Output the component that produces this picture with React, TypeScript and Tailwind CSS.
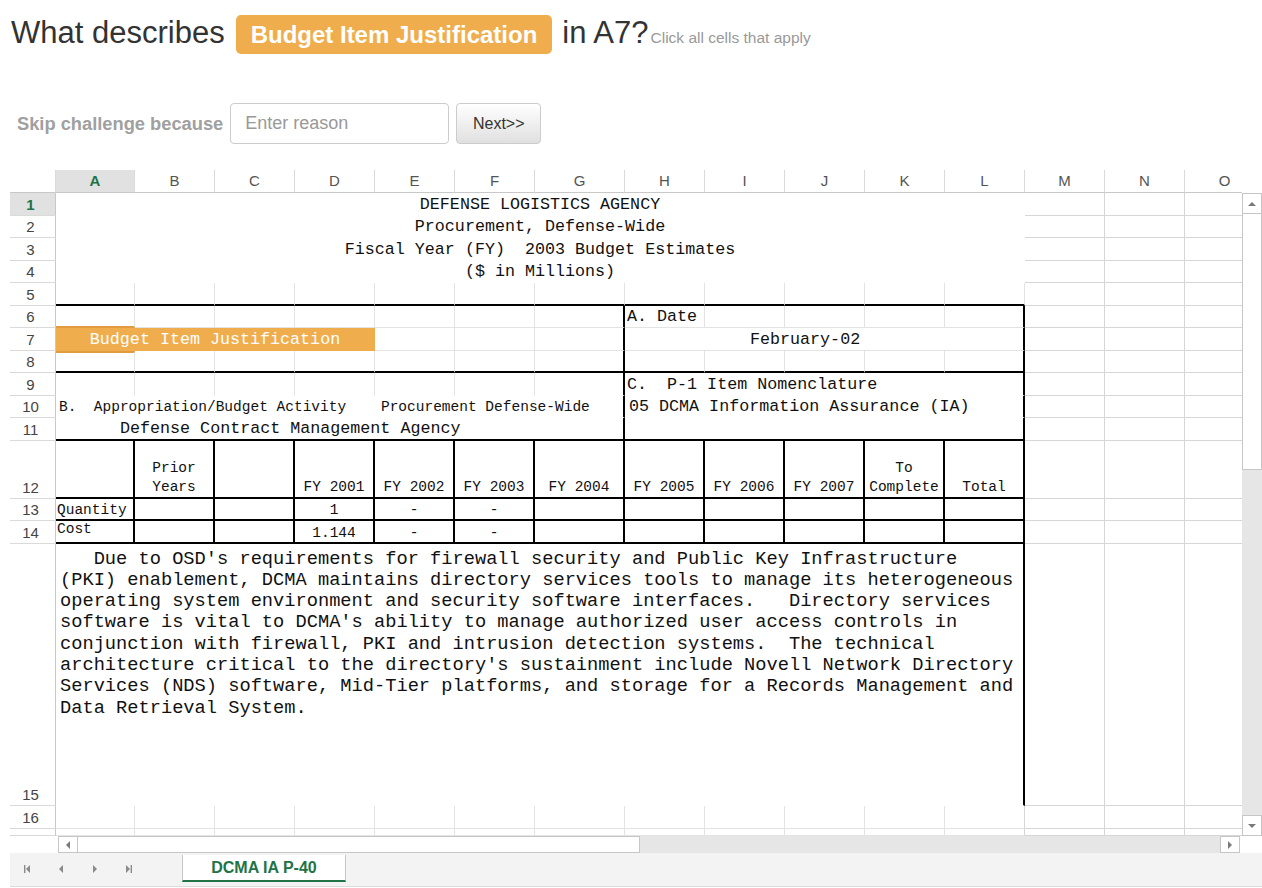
import React from "react";
import clsx from "clsx";

type BK = "w" | "g" | "k" | "o" | "d" | "t";

const BB: Record<BK, string> = {
  w: "border-b border-b-white",
  g: "border-b border-b-[#e3e3e3]",
  k: "border-b-2 border-b-black",
  o: "border-b-2 border-b-[#e39b40]",
  d: "border-b border-b-[#d6d6d6]",
  t: "border-b border-b-transparent",
};

const RR: Record<BK, string> = {
  w: "border-r border-r-white",
  g: "border-r border-r-[#e3e3e3]",
  k: "border-r-2 border-r-black",
  o: "border-r-2 border-r-[#e39b40]",
  d: "border-r border-r-[#d6d6d6]",
  t: "border-r border-r-transparent",
};

function X({
  w,
  b = "w",
  r = "w",
  c,
  children,
}: {
  w: string;
  b?: BK;
  r?: BK;
  c?: string;
  children?: React.ReactNode;
}) {
  return <div className={clsx("box-border h-full shrink-0", w, BB[b], RR[r], c)}>{children}</div>;
}

// columns M, N, O to the right of the form
function Rest() {
  return (
    <>
      <X w="w-[80px]" b="d" r="d" />
      <X w="w-[80px]" b="d" r="d" />
      <X w="w-[80px]" b="d" r="d" />
    </>
  );
}

const big = "text-[16.7px] leading-[18px] flex items-end pb-[1px] whitespace-pre";
const small = "text-[14.5px] leading-[17px] whitespace-pre";
const head = clsx(small, "flex items-end justify-center text-center leading-[19px]");
const num = clsx(small, "flex items-end justify-center");

const colHeads: [string, string][] = [
  ["A", "w-[79px]"],
  ["B", "w-[80px]"],
  ["C", "w-[80px]"],
  ["D", "w-[80px]"],
  ["E", "w-[80px]"],
  ["F", "w-[80px]"],
  ["G", "w-[90px]"],
  ["H", "w-[80px]"],
  ["I", "w-[80px]"],
  ["J", "w-[80px]"],
  ["K", "w-[80px]"],
  ["L", "w-[80px]"],
  ["M", "w-[80px]"],
  ["N", "w-[80px]"],
  ["O", "w-[80px]"],
];

const rowHeads: [string, string][] = [
  ["1", "h-[22.5px]"],
  ["2", "h-[22.5px]"],
  ["3", "h-[22.5px]"],
  ["4", "h-[22.5px]"],
  ["5", "h-[22.5px]"],
  ["6", "h-[22.5px]"],
  ["7", "h-[22.5px]"],
  ["8", "h-[22.5px]"],
  ["9", "h-[22.5px]"],
  ["10", "h-[22.5px]"],
  ["11", "h-[22.5px]"],
  ["12", "h-[58px]"],
  ["13", "h-[22.5px]"],
  ["14", "h-[22.5px]"],
  ["15", "h-[262.5px]"],
  ["16", "h-[22.5px]"],
  ["", "h-[7.5px]"],
];

const paragraph = [
  "   Due to OSD's requirements for firewall security and Public Key Infrastructure",
  "(PKI) enablement, DCMA maintains directory services tools to manage its heterogeneous",
  "operating system environment and security software interfaces.   Directory services",
  "software is vital to DCMA's ability to manage authorized user access controls in",
  "conjunction with firewall, PKI and intrusion detection systems.  The technical",
  "architecture critical to the directory's sustainment include Novell Network Directory",
  "Services (NDS) software, Mid-Tier platforms, and storage for a Records Management and",
  "Data Retrieval System.",
].join("\n");

const fy = ["FY 2001", "FY 2002", "FY 2003", "FY 2004", "FY 2005", "FY 2006", "FY 2007"];

function Row({ h, children }: { h: string; children: React.ReactNode }) {
  return <div className={clsx("flex", h)}>{children}</div>;
}

function Tri({ dir }: { dir: "up" | "down" | "left" | "right" }) {
  const pts = {
    up: "1,7 5,3 9,7",
    down: "1,3 5,7 9,3",
    left: "7,1 3,5 7,9",
    right: "3,1 7,5 3,9",
  }[dir];
  return (
    <svg width="10" height="10" viewBox="0 0 10 10">
      <polygon points={pts} fill="#7a7a7a" />
    </svg>
  );
}

function Sheet() {
  return (
    <div className="mt-[26px] ml-[10px] w-[1252px]">
      {/* column headers */}
      <div className="flex h-[23px]">
        <div className="w-[46px] shrink-0 border-b border-b-[#c8c8c8] border-r border-r-[#dadada]" />
        <div className="flex w-[1186px] overflow-hidden">
          {colHeads.map(([l, w]) => (
            <div
              key={l}
              className={clsx(
                "box-border flex h-full shrink-0 items-center justify-center border-b border-b-[#c8c8c8] border-r border-r-[#dadada] text-[15px]",
                w,
                l === "A" ? "bg-[#e1e1e1] font-bold text-[#217346]" : "text-[#555]"
              )}
            >
              {l}
            </div>
          ))}
        </div>
        <div className="w-[20px] shrink-0" />
      </div>

      <div className="flex h-[643px]">
        {/* row headers */}
        <div className="flex w-[46px] shrink-0 flex-col">
          {rowHeads.map(([n, h], i) => (
            <div
              key={i}
              className={clsx(
                "box-border flex shrink-0 items-end justify-center border-b border-b-[#dadada] border-r border-r-[#c8c8c8] pr-[4px] text-[15px] leading-[21px]",
                h,
                n === "1" ? "bg-[#e1e1e1] font-bold text-[#217346]" : "text-[#444]"
              )}
            >
              {n}
            </div>
          ))}
        </div>

        {/* cells */}
        <div className="w-[1186px] overflow-hidden font-['Liberation_Mono'] text-[#111]">
          {[
            "DEFENSE LOGISTICS AGENCY",
            "Procurement, Defense-Wide",
            "Fiscal Year (FY)  2003 Budget Estimates",
            "($ in Millions)",
          ].map((t) => (
            <Row key={t} h="h-[22.5px]">
              <X w="w-[969px]" c={clsx(big, "justify-center")}>
                {t}
              </X>
              <Rest />
            </Row>
          ))}

          <Row h="h-[22.5px]">
            <X w="w-[79px]" b="k" r="g" />
            <X w="w-[80px]" b="k" r="g" />
            <X w="w-[80px]" b="k" r="g" />
            <X w="w-[80px]" b="k" r="g" />
            <X w="w-[80px]" b="k" r="g" />
            <X w="w-[80px]" b="k" r="g" />
            <X w="w-[90px]" b="k" r="g" />
            <X w="w-[80px]" b="k" r="g" />
            <X w="w-[80px]" b="k" r="g" />
            <X w="w-[80px]" b="k" r="g" />
            <X w="w-[80px]" b="k" r="g" />
            <X w="w-[80px]" b="k" r="g" />
            <Rest />
          </Row>

          <Row h="h-[22.5px]">
            <X w="w-[79px]" b="o" r="g" />
            <X w="w-[80px]" b="g" r="g" />
            <X w="w-[80px]" b="g" r="g" />
            <X w="w-[80px]" b="g" r="g" />
            <X w="w-[80px]" b="g" r="g" />
            <X w="w-[80px]" b="g" r="g" />
            <X w="w-[90px]" b="g" r="k" />
            <X w="w-[80px]" b="g" r="g" c={clsx(big, "pl-[2px]")}>
              A. Date
            </X>
            <X w="w-[80px]" b="g" r="g" />
            <X w="w-[80px]" b="g" r="g" />
            <X w="w-[80px]" b="g" r="g" />
            <X w="w-[80px]" b="g" r="k" />
            <Rest />
          </Row>

          <Row h="h-[22.5px]">
            <X w="w-[319px]" b="t" r="t" c={clsx(big, "justify-center bg-[#f0ad4e] text-white")}>
              Budget Item Justification
            </X>
            <X w="w-[80px]" b="g" r="g" />
            <X w="w-[80px]" b="g" r="g" />
            <X w="w-[90px]" b="g" r="k" />
            <X w="w-[400px]" b="g" r="k" c={clsx(big, "pl-[125px]")}>
              February-02
            </X>
            <Rest />
          </Row>

          <Row h="h-[22.5px]">
            <X w="w-[79px]" b="k" r="g" c="border-t-2 border-t-[#e39b40]" />
            <X w="w-[80px]" b="k" r="g" />
            <X w="w-[80px]" b="k" r="g" />
            <X w="w-[80px]" b="k" r="g" />
            <X w="w-[80px]" b="k" r="g" />
            <X w="w-[80px]" b="k" r="g" />
            <X w="w-[90px]" b="k" r="k" />
            <X w="w-[80px]" b="k" r="g" />
            <X w="w-[80px]" b="k" r="g" />
            <X w="w-[80px]" b="k" r="g" />
            <X w="w-[80px]" b="k" r="g" />
            <X w="w-[80px]" b="k" r="k" />
            <Rest />
          </Row>

          <Row h="h-[22.5px]">
            <X w="w-[79px]" r="g" />
            <X w="w-[80px]" r="g" />
            <X w="w-[80px]" r="g" />
            <X w="w-[80px]" r="g" />
            <X w="w-[80px]" r="g" />
            <X w="w-[80px]" r="g" />
            <X w="w-[90px]" r="k" />
            <X w="w-[400px]" r="k" c={clsx(big, "pl-[2px]")}>
              {"C.  P-1 Item Nomenclature"}
            </X>
            <Rest />
          </Row>

          <Row h="h-[22.5px]">
            <X w="w-[569px]" r="k" c={clsx(small, "flex items-end pb-[1px] pl-[3px]")}>
              {"B.  Appropriation/Budget Activity    Procurement Defense-Wide"}
            </X>
            <X w="w-[400px]" r="k" c={clsx(big, "pl-[4px]")}>
              05 DCMA Information Assurance (IA)
            </X>
            <Rest />
          </Row>

          <Row h="h-[22.5px]">
            <X w="w-[569px]" b="k" r="k" c={clsx(big, "pl-[64px]")}>
              Defense Contract Management Agency
            </X>
            <X w="w-[400px]" b="k" r="k" />
            <Rest />
          </Row>

          <Row h="h-[58px]">
            <X w="w-[79px]" b="k" r="k" />
            <X w="w-[80px]" b="k" r="k" c={head}>
              {"Prior\nYears"}
            </X>
            <X w="w-[80px]" b="k" r="k" />
            {fy.map((f, i) => (
              <X key={f} w={i === 3 ? "w-[90px]" : "w-[80px]"} b="k" r="k" c={head}>
                {f}
              </X>
            ))}
            <X w="w-[80px]" b="k" r="k" c={head}>
              {"To\nComplete"}
            </X>
            <X w="w-[80px]" b="k" r="k" c={head}>
              Total
            </X>
            <Rest />
          </Row>

          {[
            ["Quantity", "1", "items-end"],
            ["Cost", "1.144", "items-start"],
          ].map(([label, v, al]) => (
            <Row key={label} h="h-[22.5px]">
              <X w="w-[79px]" b="k" r="k" c={clsx(small, "flex pl-[1px]", al)}>
                {label}
              </X>
              <X w="w-[80px]" b="k" r="k" />
              <X w="w-[80px]" b="k" r="k" />
              <X w="w-[80px]" b="k" r="k" c={num}>
                {v}
              </X>
              <X w="w-[80px]" b="k" r="k" c={num}>
                -
              </X>
              <X w="w-[80px]" b="k" r="k" c={num}>
                -
              </X>
              <X w="w-[90px]" b="k" r="k" />
              <X w="w-[80px]" b="k" r="k" />
              <X w="w-[80px]" b="k" r="k" />
              <X w="w-[80px]" b="k" r="k" />
              <X w="w-[80px]" b="k" r="k" />
              <X w="w-[80px]" b="k" r="k" />
              <Rest />
            </Row>
          ))}

          <Row h="h-[262.5px]">
            <X w="w-[969px]" r="k" c="whitespace-pre pl-[4px] pt-[5px] text-[18.7px] leading-[21.3px]">
              {paragraph}
            </X>
            <Rest />
          </Row>

          {["h-[22.5px]", "h-[7.5px]"].map((h) => (
            <Row key={h} h={h}>
              <X w="w-[79px]" b="g" r="g" />
              <X w="w-[80px]" b="g" r="g" />
              <X w="w-[80px]" b="g" r="g" />
              <X w="w-[80px]" b="g" r="g" />
              <X w="w-[80px]" b="g" r="g" />
              <X w="w-[80px]" b="g" r="g" />
              <X w="w-[90px]" b="g" r="g" />
              <X w="w-[80px]" b="g" r="g" />
              <X w="w-[80px]" b="g" r="g" />
              <X w="w-[80px]" b="g" r="g" />
              <X w="w-[80px]" b="g" r="g" />
              <X w="w-[80px]" b="g" r="d" />
              <Rest />
            </Row>
          ))}
        </div>

        {/* vertical scrollbar */}
        <div className="flex w-[20px] shrink-0 flex-col bg-[#e6e6e6]">
          <div className="flex h-[21px] shrink-0 items-center justify-center border border-[#c6c6c6] bg-white">
            <Tri dir="up" />
          </div>
          <div className="h-[256px] shrink-0 border-x border-b border-[#c6c6c6] bg-white" />
          <div className="flex-1" />
          <div className="flex h-[21px] shrink-0 items-center justify-center border border-[#c6c6c6] bg-white">
            <Tri dir="down" />
          </div>
        </div>
      </div>

      {/* horizontal scrollbar */}
      <div className="flex h-[17px]">
        <div className="w-[48px] shrink-0" />
        <div className="flex w-[20px] shrink-0 items-center justify-center border border-[#c6c6c6] bg-white">
          <Tri dir="left" />
        </div>
        <div className="w-[562px] shrink-0 border-y border-r border-[#c6c6c6] bg-white" />
        <div className="w-[580px] shrink-0 bg-[#e6e6e6]" />
        <div className="flex w-[20px] shrink-0 items-center justify-center border border-[#c6c6c6] bg-white">
          <Tri dir="right" />
        </div>
        <div className="flex-1" />
      </div>

      {/* sheet tabs */}
      <div className="flex h-[34px] items-start border-b border-[#dcdcdc] bg-[#f3f3f3]">
        <div className="flex h-[30px] items-center gap-[24px] pl-[12px] pt-[2px]">
          <svg width="10" height="10" viewBox="0 0 10 10">
            <rect x="2" y="1" width="1.4" height="8" fill="#8a8a8a" />
            <polygon points="8,1 4,5 8,9" fill="#8a8a8a" />
          </svg>
          <svg width="10" height="10" viewBox="0 0 10 10">
            <polygon points="7,1 3,5 7,9" fill="#8a8a8a" />
          </svg>
          <svg width="10" height="10" viewBox="0 0 10 10">
            <polygon points="3,1 7,5 3,9" fill="#8a8a8a" />
          </svg>
          <svg width="10" height="10" viewBox="0 0 10 10">
            <polygon points="2,1 6,5 2,9" fill="#8a8a8a" />
            <rect x="6.6" y="1" width="1.4" height="8" fill="#8a8a8a" />
          </svg>
        </div>
        <div className="ml-[48px] mt-[2px] flex h-[27px] w-[164px] items-center justify-center border-x border-x-[#c6c6c6] border-b-2 border-b-[#217346] bg-white text-[16px] font-bold text-[#217346]">
          DCMA IA P-40
        </div>
      </div>
    </div>
  );
}

export default function App() {
  return (
    <div className="h-[888px] w-[1262px] overflow-hidden bg-white font-['Liberation_Sans',Arial,sans-serif]">
      <div className="h-[103px]">
        <div className="flex items-baseline pl-[11px] pt-[15px] text-[#333]">
          <span className="text-[31px] leading-none">What describes</span>
          <span className="ml-[11px] inline-block rounded-[5px] bg-[#f0ad4e] px-[15px] py-[6px] text-[24px] font-bold leading-[27px] text-white">
            Budget Item Justification
          </span>
          <span className="ml-[10px] text-[31px] leading-none">in A7?</span>
          <span className="ml-[2px] text-[15.5px] text-[#999]">Click all cells that apply</span>
        </div>
      </div>

      <div className="flex h-[41px] items-center pl-[17px]">
        <span className="text-[18.3px] font-bold text-[#a0a0a0]">Skip challenge because</span>
        <input
          placeholder="Enter reason"
          className="ml-[7px] box-border h-[41px] w-[219px] rounded-[4px] border border-[#ccc] px-[14px] text-[18px] text-[#555] outline-none placeholder:text-[#999]"
        />
        <button className="ml-[7px] box-border h-[41px] w-[85px] rounded-[4px] border border-[#ccc] bg-linear-to-b from-white to-[#e0e0e0] text-[16px] text-[#333]">
          {"Next>>"}
        </button>
      </div>

      <Sheet />
    </div>
  );
}
